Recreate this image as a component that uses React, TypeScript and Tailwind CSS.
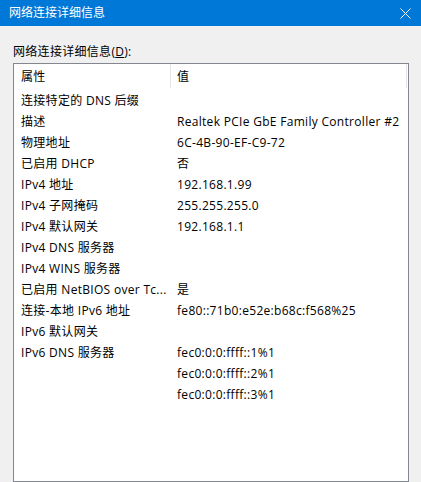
const rows: [string, string][] = [
  ["连接特定的 DNS 后缀", ""],
  ["描述", "Realtek PCIe GbE Family Controller #2"],
  ["物理地址", "6C-4B-90-EF-C9-72"],
  ["已启用 DHCP", "否"],
  ["IPv4 地址", "192.168.1.99"],
  ["IPv4 子网掩码", "255.255.255.0"],
  ["IPv4 默认网关", "192.168.1.1"],
  ["IPv4 DNS 服务器", ""],
  ["IPv4 WINS 服务器", ""],
  ["已启用 NetBIOS over Tc...", "是"],
  ["连接-本地 IPv6 地址", "fe80::71b0:e52e:b68c:f568%25"],
  ["IPv6 默认网关", ""],
  ["IPv6 DNS 服务器", "fec0:0:0:ffff::1%1"],
  ["", "fec0:0:0:ffff::2%1"],
  ["", "fec0:0:0:ffff::3%1"],
];

export default function App() {
  return (
    <div className="flex h-[482px] w-[421px] flex-col overflow-hidden bg-[#f0f0f0] font-['Open_Sans','Noto_Sans_CJK_SC',sans-serif] text-[12px] text-black">
      {/* title bar */}
      <div className="flex h-[26px] shrink-0 items-center justify-between bg-[#0078d7] pl-[9px] pr-[10px] text-white">
        <span className="leading-none">网络连接详细信息</span>
        <svg width="11" height="11" viewBox="0 0 11 11" className="text-white">
          <path d="M0.5 0.5 L10.5 10.5 M10.5 0.5 L0.5 10.5" stroke="currentColor" strokeWidth="1" />
        </svg>
      </div>

      <div className="flex flex-1 flex-col pl-[13px] pt-[18px] tracking-[0.3px]">
        <div className="h-[16px] leading-[16px]">
          网络连接详细信息(<span className="underline">D</span>):
        </div>

        {/* list view */}
        <div className="mt-[3px] flex w-[396px] flex-1 flex-col border border-[#828790] bg-white">
          <div className="flex h-[24px] shrink-0 items-center">
            <div className="flex h-full w-[157px] items-center border-r border-[#e5e5e5] pl-[7px] pt-[1px]">
              属性
            </div>
            <div className="flex h-full w-[236px] items-center border-r border-[#e5e5e5] pl-[6px] pt-[1px]">
              值
            </div>
          </div>
          <div className="pt-[2px]">
            {rows.map(([k, v], i) => (
              <div key={i} className="flex h-[21px] items-center whitespace-nowrap leading-[16px]">
                <div className="w-[157px] shrink-0 overflow-hidden pl-[7px]">{k}</div>
                <div className="pl-[6px]">{v}</div>
              </div>
            ))}
          </div>
        </div>
      </div>
    </div>
  );
}
